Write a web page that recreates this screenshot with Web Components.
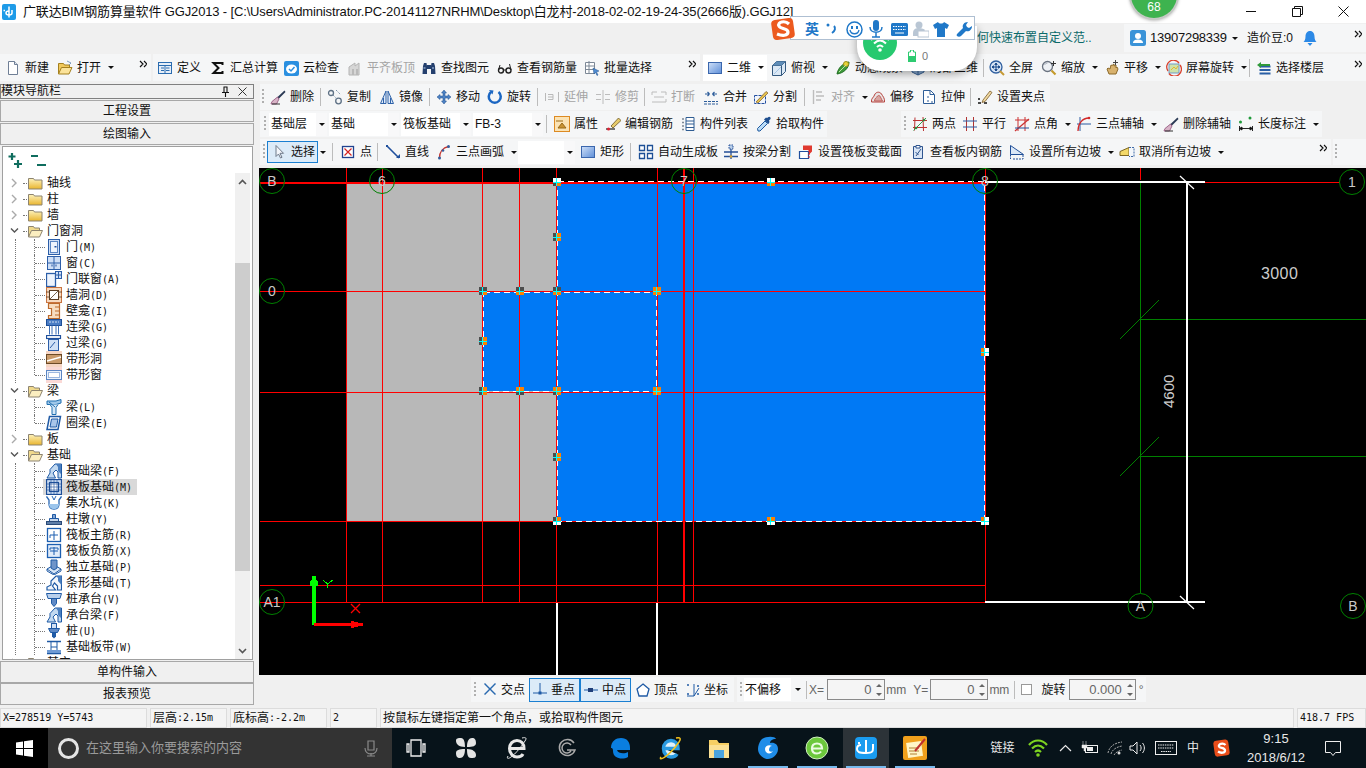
<!doctype html>
<html>
<head>
<meta charset="utf-8">
<style>
  html, body { margin: 0; height: 100%; overflow: hidden; }
  body {
    width: 1366px; height: 768px; position: relative;
    display: flex; flex-direction: column;
    background: #f0f0f0; color: #111;
    font: 12px/16px "Liberation Sans", "Noto Sans CJK SC", sans-serif;
  }
  .row { display: flex; flex: none; }
  .main { display: flex; flex: none; height: 623px; }
  .work { display: flex; flex-direction: column; width: 1107px; margin-left: 5px; flex: none; }
  .work .row { margin-left: 1px; gap: 0; }
  i { font: normal 10px/16px "DejaVu Sans Mono", monospace; }
</style>
</head>
<body>

<gl-titlebar>广联达BIM钢筋算量软件 GGJ2013 - [C:\Users\Administrator.PC-20141127NRHM\Desktop\白龙村-2018-02-02-19-24-35(2666版).GGJ12]</gl-titlebar>

<div class="row" style="height:31px;padding-top:1px;box-sizing:border-box;justify-content:flex-end">
  <gl-bar style="height:28px;width:147px;background:#f0f0f0">
    <span style="color:#0b6a6a;white-space:nowrap">何快速布置自定义范..</span>
  </gl-bar>
  <gl-bar style="height:28px;width:242px">
    <gl-tool i="user" w="103" style="margin-left:2px"><span style="font-size:13px;letter-spacing:-.25px">13907298339</span></gl-tool>
    <gl-drop></gl-drop>
    <span style="margin-left:6px;white-space:nowrap">造价豆:0</span>
    <gl-icon n="bell" style="margin-left:9px"></gl-icon>
    <gl-more style="margin-left:auto"></gl-more>
  </gl-bar>
</div>

<div class="row" style="height:30px;padding-bottom:3px;box-sizing:border-box">
  <gl-bar style="width:151px;padding-left:1px">
    <gl-tool i="new" w="52">新建</gl-tool>
    <gl-tool i="open" w="64" drop>打开</gl-tool>
    <gl-more style="margin-left:auto"></gl-more>
  </gl-bar>
  <gl-bar style="width:547px;margin-left:2px">
    <gl-tool i="define" w="53">定义</gl-tool>
    <gl-tool i="sigma" w="73">汇总计算</gl-tool>
    <gl-tool i="cloud" w="64">云检查</gl-tool>
    <gl-tool i="flat" w="74" disabled>平齐板顶</gl-tool>
    <gl-tool i="find" w="76">查找图元</gl-tool>
    <gl-tool i="glasses" w="87">查看钢筋量</gl-tool>
    <gl-tool i="batch" w="71">批量选择</gl-tool>
    <gl-more style="margin-left:auto"></gl-more>
  </gl-bar>
  <gl-bar style="width:663px;margin-left:3px">
    <gl-tool i="rect" w="64" drop style="background:#fff;height:26px">二维</gl-tool>
    <gl-tool i="cube" w="64" drop>俯视</gl-tool>
    <gl-tool i="orbit" w="75">动态观察</gl-tool>
    <gl-tool i="local" w="75">局部三维</gl-tool>
    <gl-sep w="4"></gl-sep>
    <gl-tool i="full" w="52">全屏</gl-tool>
    <gl-tool i="zoom" w="63" drop>缩放</gl-tool>
    <gl-tool i="pan" w="62" drop>平移</gl-tool>
    <gl-tool i="turn" w="84" drop>屏幕旋转</gl-tool>
    <gl-sep w="6"></gl-sep>
    <gl-tool i="floors" w="76">选择楼层</gl-tool>
    <gl-more style="margin-left:auto"></gl-more>
  </gl-bar>
</div>

<div class="main">
  <gl-sidebar>
    <gl-tree-folder label="轴线"></gl-tree-folder>
    <gl-tree-folder label="柱"></gl-tree-folder>
    <gl-tree-folder label="墙"></gl-tree-folder>
    <gl-tree-folder label="门窗洞" open>
      <gl-tree-leaf i="door" k="(M)">门</gl-tree-leaf>
      <gl-tree-leaf i="win" k="(C)">窗</gl-tree-leaf>
      <gl-tree-leaf i="doorwin" k="(A)">门联窗</gl-tree-leaf>
      <gl-tree-leaf i="hole" k="(D)">墙洞</gl-tree-leaf>
      <gl-tree-leaf i="niche" k="(I)">壁龛</gl-tree-leaf>
      <gl-tree-leaf i="link" k="(G)">连梁</gl-tree-leaf>
      <gl-tree-leaf i="lintel" k="(G)">过梁</gl-tree-leaf>
      <gl-tree-leaf i="bandhole">带形洞</gl-tree-leaf>
      <gl-tree-leaf i="bandwin" last>带形窗</gl-tree-leaf>
    </gl-tree-folder>
    <gl-tree-folder label="梁" open>
      <gl-tree-leaf i="beam" k="(L)">梁</gl-tree-leaf>
      <gl-tree-leaf i="ring" k="(E)" last>圈梁</gl-tree-leaf>
    </gl-tree-folder>
    <gl-tree-folder label="板"></gl-tree-folder>
    <gl-tree-folder label="基础" open>
      <gl-tree-leaf i="fbeam" k="(F)">基础梁</gl-tree-leaf>
      <gl-tree-leaf i="raft" k="(M)" selected>筏板基础</gl-tree-leaf>
      <gl-tree-leaf i="sump" k="(K)">集水坑</gl-tree-leaf>
      <gl-tree-leaf i="pier" k="(Y)">柱墩</gl-tree-leaf>
      <gl-tree-leaf i="rmain" k="(R)">筏板主筋</gl-tree-leaf>
      <gl-tree-leaf i="rneg" k="(X)">筏板负筋</gl-tree-leaf>
      <gl-tree-leaf i="iso" k="(P)">独立基础</gl-tree-leaf>
      <gl-tree-leaf i="strip" k="(T)">条形基础</gl-tree-leaf>
      <gl-tree-leaf i="pcap" k="(V)">桩承台</gl-tree-leaf>
      <gl-tree-leaf i="fbeam" k="(F)">承台梁</gl-tree-leaf>
      <gl-tree-leaf i="pile" k="(U)">桩</gl-tree-leaf>
      <gl-tree-leaf i="band" k="(W)">基础板带</gl-tree-leaf>
    </gl-tree-folder>
    <gl-tree-folder label="其它"></gl-tree-folder>
  </gl-sidebar>

  <div class="work">
    <div class="row" style="height:26px;margin-bottom:1px">
      <gl-bar grip="6" style="width:790px">
        <gl-tool i="erase" w="52">删除</gl-tool>
        <gl-sep w="5"></gl-sep>
        <gl-tool i="copy" w="52">复制</gl-tool>
        <gl-tool i="mirror" w="51">镜像</gl-tool>
        <gl-sep w="6"></gl-sep>
        <gl-tool i="move" w="51">移动</gl-tool>
        <gl-tool i="spin" w="52">旋转</gl-tool>
        <gl-sep w="5"></gl-sep>
        <gl-tool i="extend" w="51" disabled>延伸</gl-tool>
        <gl-tool i="trim" w="51" disabled>修剪</gl-tool>
        <gl-sep w="5"></gl-sep>
        <gl-tool i="break" w="52" disabled>打断</gl-tool>
        <gl-tool i="merge" w="50">合并</gl-tool>
        <gl-tool i="split" w="53">分割</gl-tool>
        <gl-sep w="5"></gl-sep>
        <gl-tool i="align" w="59" disabled drop>对齐</gl-tool>
        <gl-tool i="offset" w="51">偏移</gl-tool>
        <gl-tool i="stretch" w="51">拉伸</gl-tool>
        <gl-sep w="5"></gl-sep>
        <gl-tool i="grips" w="76">设置夹点</gl-tool>
      </gl-bar>
    </div>
    <div class="row" style="height:26px;margin-bottom:2px">
      <gl-bar grip="9" style="width:567px">
        <gl-combo w="58">基础层</gl-combo>
        <gl-combo w="70" style="margin-left:2px">基础</gl-combo>
        <gl-combo w="70" style="margin-left:2px">筏板基础</gl-combo>
        <gl-combo w="70" style="margin-left:2px">FB-3</gl-combo>
        <gl-sep w="7"></gl-sep>
        <gl-tool i="attr" w="51">属性</gl-tool>
        <gl-tool i="pen" w="75">编辑钢筋</gl-tool>
        <gl-tool i="list" w="76">构件列表</gl-tool>
        <gl-tool i="pick" w="75">拾取构件</gl-tool>
      </gl-bar>
      <gl-bar grip="7" style="width:421px;margin-left:74px">
        <gl-tool i="two" w="50">两点</gl-tool>
        <gl-tool i="par" w="52">平行</gl-tool>
        <gl-tool i="ang" w="62" drop>点角</gl-tool>
        <gl-tool i="arc3" w="87" drop>三点辅轴</gl-tool>
        <gl-tool i="erase" w="75">删除辅轴</gl-tool>
        <gl-tool i="dim" w="88" drop>长度标注</gl-tool>
      </gl-bar>
    </div>
    <div class="row" style="height:26px;margin-bottom:3px">
      <gl-bar grip="7" style="width:1071px">
        <gl-tool i="cursor" w="51" on>选择</gl-tool>
        <gl-drop style="width:10px"></gl-drop>
        <gl-sep w="8"></gl-sep>
        <gl-tool i="point" w="38">点</gl-tool>
        <gl-sep w="7"></gl-sep>
        <gl-tool i="line" w="51">直线</gl-tool>
        <gl-tool i="arc" w="84" drop>三点画弧</gl-tool>
        <gl-combo w="57" style="margin:0 1px 0 2px"></gl-combo>
        <gl-tool i="rect" w="51">矩形</gl-tool>
        <gl-sep w="7"></gl-sep>
        <gl-tool i="auto" w="85">自动生成板</gl-tool>
        <gl-tool i="bsplit" w="75">按梁分割</gl-tool>
        <gl-tool i="section" w="112">设置筏板变截面</gl-tool>
        <gl-tool i="viewbar" w="99">查看板内钢筋</gl-tool>
        <gl-tool i="slope" w="110" drop>设置所有边坡</gl-tool>
        <gl-tool i="noslope" w="110" drop>取消所有边坡</gl-tool>
        <gl-more style="margin-left:auto"></gl-more>
      </gl-bar>
      <gl-bar grip="6" style="width:33px;margin-left:2px"></gl-bar>
    </div>

    <gl-canvas></gl-canvas>

    <gl-snapbar></gl-snapbar>
  </div>
</div>

<gl-statusbar>
  <gl-cell w="147"><i>X=278519 Y=5743</i></gl-cell>
  <gl-cell w="77">层高<i>:2.15m</i></gl-cell>
  <gl-cell w="97">底标高<i>:-2.2m</i></gl-cell>
  <gl-cell w="47"><i>2</i></gl-cell>
  <gl-cell w="914">按鼠标左键指定第一个角点，或拾取构件图元</gl-cell>
  <gl-cell w="69"><i>418.7 FPS</i></gl-cell>
</gl-statusbar>

<win-taskbar></win-taskbar>

<gl-float-ball></gl-float-ball>
<ime-bar></ime-bar>

<script>
  'use strict';
  // icon bodies, all on a 16x16 box
  const ICONS = {
    new: '<path d="M3.5 1.5h6l3 3v10h-9z" fill="#fff" stroke="#6f7f96"/><path d="M9.5 1.5v3h3" fill="#dfe6ef" stroke="#6f7f96"/>',
    open: '<path d="M1.5 14V3.5h5l1 1.5h5V8" fill="#f1c95c" stroke="#a4801f"/><path d="M1.5 14l3-6.5h10.500l-3 6.500z" fill="#fbe39a" stroke="#a4801f"/><path d="M10 1l4 2-2 2" fill="none" stroke="#7c9cc0"/>',
    define: '<rect x="1.500" y="2.500" width="13" height="11" fill="#e6eef8" stroke="#2b6cb0"/><path d="M1.500 5.500h13M4 8h3M4 10.500h3M9 8h3.500M9 10.500h3.500M8 5.500v8" stroke="#2b6cb0" fill="none"/>',
    sigma: '<path d="M12.500 5V3h-9l5 5-5 5h9v-2" fill="none" stroke="#111" stroke-width="2"/>',
    cloud: '<rect x="1" y="1" width="15" height="15" rx="2" fill="#2a8fe0"/><ellipse cx="8.500" cy="9" rx="5.500" ry="4.500" fill="#fff"/><path d="M6 9l2 2 3.500-4" fill="none" stroke="#2a8fe0" stroke-width="1.500"/>',
    flat: '<path d="M2 15V7l6-4v3l4-3v12z" fill="#d6d6d6" stroke="#b4b4b4"/><path d="M5 9h2v6H5zM9 9h2v6H9z" fill="#b9b9b9"/>',
    find: '<path d="M2 6l1-3h2.500l.5 3v8H1.500zM10 6l.5-3H13l1 3 .5 8H10z" fill="#24406e"/><rect x="6" y="5" width="4" height="4" fill="#24406e"/><path d="M2.500 8h2M11 8h2" stroke="#b7cff0"/>',
    glasses: '<circle cx="4" cy="10.500" r="2.500" fill="none" stroke="#222" stroke-width="1.400"/><circle cx="11.500" cy="10.500" r="2.500" fill="none" stroke="#222" stroke-width="1.400"/><path d="M6.500 10h2.500M1.500 10L3 5M14 10l-1.500-6" stroke="#222" fill="none"/>',
    batch: '<path d="M1.500 2.500h9v11h-9zM1.500 6h9M1.500 9.500h9M5 1v13" fill="#fff" stroke="#7d8896"/><path d="M9 8l6 3-2.500 1 1.500 3-1 .5-1.500-3L10 14z" fill="#4e8ad0" stroke="#24548f" stroke-width=".5"/>',
    rect: '<defs><linearGradient id="g1" x1="0" y1="0" x2="1" y2="1"><stop offset="0" stop-color="#cfe0f8"/><stop offset="1" stop-color="#5d8ed8"/></linearGradient></defs><rect x="1.500" y="2.500" width="13" height="11" fill="url(#g1)" stroke="#3a66ad"/>',
    cube: '<path d="M1.500 5.500l4-4h9v10l-4 4h-9z" fill="#dbe8f5" stroke="#34597f"/><path d="M1.500 5.500h9v10M10.500 5.500l4-4" fill="none" stroke="#34597f"/><path d="M1.500 5.500l4-4h9l-4 4z" fill="#5f8db8"/><path d="M3 14l7-7" stroke="#a6c5e4"/>',
    orbit: '<path d="M2 14C3 8 8 3 14 2c0 6-5 11-12 12z" fill="#3e9a3a" stroke="#1f6d22"/><circle cx="11" cy="4" r="2.500" fill="#e7d43a" stroke="#9d8f1c"/><path d="M4 12l7-7" stroke="#b9e6a8"/>',
    local: '<path d="M2 5l6-3 6 3v7l-6 3-6-3z" fill="#88a9cf" stroke="#355f93"/><path d="M2 5l6 3 6-3M8 8v7" fill="none" stroke="#355f93"/>',
    full: '<circle cx="7" cy="7" r="6" fill="#d7e3f4" stroke="#2f5f9f" stroke-width="1.300"/><path d="M7 3v8M3 7h8M7 3L5.800 4.500h2.400zM7 11l-1.200-1.500h2.400zM3 7l1.500-1.200v2.400zM11 7L9.500 5.800v2.400z" stroke="#1d4d8d" fill="#1d4d8d"/><path d="M11 11l4 4" stroke="#c59a35" stroke-width="2"/>',
    zoom: '<circle cx="6.500" cy="6.500" r="5" fill="#eef1f5" stroke="#6a7380" stroke-width="1.300"/><path d="M3.500 5a3.500 3.500 0 0 1 3-2" stroke="#aab2bd" fill="none"/><path d="M10.500 10.500l4 4" stroke="#c49a2b" stroke-width="2.200"/><path d="M12.500 1v5M10 3.500h5" stroke="#333"/>',
    pan: '<path d="M3 9l2 5h7l2-5-1-2-1 1V5l-2 1V4L8 5.500 7 5 6 9 4 8z" fill="#d8b26e" stroke="#8c6a2b"/><path d="M11.500 0v5M9 2.500h5" stroke="#444"/>',
    turn: '<rect x="3" y="4" width="10" height="9" fill="#cfe3a9" stroke="#6f9bc9"/><path d="M5 10l3-3 2 2 2-3" fill="none" stroke="#e2b830"/><path d="M2 11A6.500 6.500 0 0 1 13 3M14 5a6.500 6.500 0 0 1-11 8.500" fill="none" stroke="#d8402c" stroke-width="1.300"/>',
    floors: '<path d="M3.500 6.500h11M3.500 10h11M3.500 13.500h11" stroke="#2a5fa5" stroke-width="1.800"/><path d="M1 5l4-3v2h9v2H5v2z" fill="#2f9a3a"/>',
    erase: '<path d="M14.500 1.500L7 8.500l1.500 1.500 7-7z" fill="#2b3a55"/><path d="M7.500 8L2 12.500c-.5 1-.8 1.800-1 2.500h5.500L9 10z" fill="#d8b3c7" stroke="#8e4f78" stroke-width=".8"/><path d="M2 15h8" stroke="#333"/>',
    copy: '<circle cx="4" cy="4" r="2.500" fill="none" stroke="#5e7185" stroke-width="1.300"/><circle cx="11.500" cy="12" r="2.800" fill="none" stroke="#5e7185" stroke-width="1.300"/><path d="M6 6l4 4M9 1l5 5" stroke="#7f93a9" stroke-dasharray="2 1.500" fill="none"/>',
    mirror: '<path d="M7 2L1.500 14.500H7zM9 2l5.500 12.500H9z" fill="#dfeafa" stroke="#2f63a9"/><path d="M4.500 9v5M11.500 9v5" stroke="#2f63a9"/>',
    move: '<path d="M8 1l2.500 3H9v3h3V5.500L15 8l-3 2.500V9H9v3h1.500L8 15l-2.500-3H7V9H4v1.500L1 8l3-2.500V7h3V4H5.500z" fill="#4d82c4" stroke="#1f4f8f" stroke-width=".5"/>',
    spin: '<path d="M11.500 3A6 6 0 1 1 4 3" fill="none" stroke="#1b66c2" stroke-width="2.500"/><path d="M2 1l4.500.5-1 4z" fill="#1b66c2"/>',
    extend: '<path d="M1.500 4v8M14.500 3v10M4 8h5M4 5.500h5v5H4" fill="none" stroke="#b9b9b9"/>',
    trim: '<path d="M8 1v14M1 5.500h5M10 5.500h5M1 10.500h5M10 10.500h5" fill="none" stroke="#bcbcbc"/>',
    break: '<path d="M1 3h5M10 3h5M1 13h14V10M1 3v3M15 3v3M3 8h10" fill="none" stroke="#bcbcbc"/>',
    merge: '<path d="M1 12.500h14M1 15h14" stroke="#2d5d9a" stroke-dasharray="3 1"/><path d="M2 5h4.500M14 5H9.500M6.500 5L4.500 3M6.500 5l-2 2M9.500 5l2-2M9.500 5l2 2" fill="none" stroke="#2d5d9a" stroke-width="1.200"/>',
    split: '<path d="M1.500 6.500h11v8h-11z" fill="#f1f5fb" stroke="#234fa0" stroke-dasharray="3 1"/><path d="M3 13L13 2.500l2 1.500L5 14z" fill="#e6c24b" stroke="#7b5a2b" stroke-width=".7"/>',
    align: '<path d="M2.500 1v14M5 3h6M5 7h8M5 11h5" fill="none" stroke="#bdbdbd" stroke-width="1.400"/>',
    offset: '<path d="M1.500 13c-.5-4 2-4 3-7 1-3 5-4 7-1 1 2 3.500 4 3 8z" fill="#e9e4e4" stroke="#b5413c"/><path d="M4.500 12c0-3 2-3 3-5 1-1 2.500-.5 3 1l2 4z" fill="#d8a6a2" stroke="#b5413c" stroke-width=".7"/>',
    stretch: '<path d="M2.500 1.500h7l4 4v9h-11z" fill="#fff" stroke="#2e5d97"/><path d="M9 1.500v4h4M7 7v2M7 11v2M10 13h2" stroke="#2e5d97" fill="none"/>',
    grips: '<path d="M1 14h3M7 14h3M1 10h2" stroke="#111" stroke-width="1.500"/><path d="M6 11L13 2l2 1.500-7 9-3 1z" fill="#efd9a2" stroke="#7a5a2a" stroke-width=".8"/>',
    attr: '<rect x=".5" y=".5" width="15" height="15" fill="#fbe3b4" stroke="#dd8a22"/><path d="M4 12l4-5 4 5zM2 5h7" fill="#c99334" stroke="#9a6a17"/>',
    pen: '<path d="M1 13h9" stroke="#2d2d2d" stroke-width="1.300"/><path d="M6 10l7.500-8L16 4.500 8 12z" fill="#e6cb6c" stroke="#6b5524" stroke-width=".8"/><circle cx="3.500" cy="13" r="1.500" fill="#d23"/>',
    list: '<path d="M2 3h2M2 6.500h2M2 10h2M2 13.500h2" stroke="#7c8794" stroke-width="1.500"/><path d="M6 1.500h8v13H6zM6 5h8M6 8h8M6 11.500h8" fill="#fff" stroke="#2f5c92"/>',
    pick: '<path d="M2 15l-.5-2.500L9 5l2.500 2.500L4 15z" fill="#bcdcf6" stroke="#1f5a9f"/><path d="M8 3.500l4.500 4.500 1-2-.5-1.500 1.500-1.500a1.500 1.500 0 0 0-2-2L11 2 10 1.500z" fill="#1f4f8f"/>',
    two: '<path d="M3 1.500l-.5 13M11 1l.5 14M1 4.500l14 0M1 11.500h14" stroke="#b33" fill="none"/><path d="M1.500 14.500L14 2" stroke="#33994a"/><circle cx="4" cy="12" r="1.300" fill="#2f8f40"/><circle cx="12" cy="4" r="1.300" fill="#2f8f40"/>',
    par: '<path d="M4.500 1v14M11.500 1v14" stroke="#b13232"/><path d="M1 5h14M1 11h14" stroke="#2d5ba3"/>',
    ang: '<path d="M4 1v14M11 1v14M1 4h14" stroke="#c33" fill="none"/><path d="M1 15L15 3" stroke="#c33" stroke-width="1.300"/><path d="M1 12h14" stroke="#234f99"/>',
    arc3: '<path d="M4 1v14M1 8h14" stroke="#2a5aa0" fill="none"/><path d="M2 15C2 8 6 2 13 2" fill="none" stroke="#d22a2a" stroke-width="1.300"/><circle cx="13" cy="2" r="1.300" fill="#d22a2a"/>',
    dim: '<circle cx="2.500" cy="6" r="1.500" fill="#1f9a3a"/><circle cx="12" cy="2" r="1.500" fill="#1f9a3a"/><path d="M1.500 10v5M14.500 10v5M1.500 12.500h13M1.500 12.500l2.500-1.500v3zM14.500 12.500l-2.500-1.500v3z" stroke="#111" fill="#111" stroke-width=".9"/>',
    cursor: '<path d="M5 1.500v11l2.500-2.500 2 4 1.500-.7-2-4h3.500z" fill="#f3f6fb" stroke="#6f7a8a"/>',
    point: '<rect x="2.500" y="2.500" width="11" height="11" fill="#fff" stroke="#20418f" stroke-width="1.300"/><path d="M4.500 4.500l7 7M11.500 4.500l-7 7" stroke="#d52424" stroke-width="1.200"/>',
    line: '<path d="M2 2l12 12" stroke="#1f4f9c" stroke-width="1.600"/><path d="M11 14h4v-4z" fill="#1f4f9c"/><rect x="1" y="1" width="2" height="2" fill="#1f4f9c"/>',
    arc: '<path d="M3.500 14C3.500 8 7 3.500 12.500 2.500" fill="none" stroke="#c6352f" stroke-width="1.500"/><circle cx="3.500" cy="14" r="1.500" fill="#355d9c"/><circle cx="7" cy="6.500" r="1.300" fill="#355d9c"/><circle cx="12.500" cy="2.500" r="1.500" fill="#355d9c"/>',
    auto: '<path d="M1.500 1.500h5v5h-5zM9.500 1.500h5v5h-5zM1.500 9.500h5v5h-5zM9.500 9.500h5v5h-5z" fill="#fff" stroke="#1c4f96" stroke-width="1.300"/>',
    bsplit: '<rect x="6" y="1" width="4" height="4" fill="#b9cfe9" stroke="#244f97" stroke-dasharray="1.500 1"/><path d="M8 5v10M1 8h14M1 12.500h14" stroke="#244f97" stroke-width="1.300"/><circle cx="8" cy="12.500" r="1.300" fill="#d8a12b"/>',
    section: '<path d="M1.500 7.500h9v7h-9z" fill="#fff" stroke="#1f4f9e" stroke-width="1.200"/><path d="M5 1.500h9v6l-3 3V6H5z" fill="#e03a30"/><path d="M11 6v9" stroke="#d22" stroke-dasharray="2 1"/>',
    viewbar: '<path d="M3.500 2.500h9v12h-9z" fill="#d8e4f4" stroke="#2e558f"/><path d="M6 1.500h4v2.500H6zM6 12l5-7M5.500 8l3 3" fill="#fff" stroke="#2e558f"/>',
    slope: '<path d="M1.500 1.500l13 9H1.500z" fill="#dbe8f7" stroke="#214f98"/><path d="M4 15h10M14 11v4M1.500 10.500V15" stroke="#214f98" stroke-dasharray="2 1" fill="none"/>',
    noslope: '<path d="M1 7.500l9-4v8H1z" fill="#f3d868" stroke="#7c6622"/><path d="M10 3.500h5v9h-5" fill="#f4f7fb" stroke="#3f6aa6" stroke-dasharray="2 1"/>',
    user: '<rect x="0" y="0" width="16" height="16" rx="2.500" fill="#3a93d8"/><circle cx="8" cy="6" r="3" fill="#fff"/><path d="M3 13c0-3 3-3.500 5-3.500s5 .5 5 3.500z" fill="#fff"/>',
    bell: '<path d="M8 1c-3 0-4.500 2.500-4.500 5.500 0 3-1 4.500-2 5.500h13c-1-1-2-2.500-2-5.500C12.500 3.500 11 1 8 1z" fill="#2c89e6"/><path d="M5.500 13h5l-2.500 3z" fill="#2c89e6"/>',
    folder: '<defs><linearGradient id="fg" x1="0" y1="0" x2="0" y2="1"><stop offset="0" stop-color="#fdf2bd"/><stop offset="1" stop-color="#e9b52e"/></linearGradient></defs><path d="M1.500 3.500h5l1 1.500h7.500v9h-13.500z" fill="url(#fg)" stroke="#8d8470"/>',
    folderopen: '<path d="M1.500 14V3.500h5l1 1.500h5v2.500" fill="#f0d98c" stroke="#8d8470"/><path d="M1.500 14l3-6.500h11l-3 6.500z" fill="#fbeec0" stroke="#8d8470"/>',
    door: '<rect x="2.500" y="0.500" width="11" height="15" fill="#cfdff6" stroke="#2c5ea8"/><rect x="4.500" y="2.500" width="7" height="11" fill="#eef4fd" stroke="#5b86c4"/><rect x="8.500" y="7" width="2" height="1.500" fill="#1f4f9c"/>',
    win: '<rect x="1.500" y="1.500" width="13" height="13" fill="#cfdff6" stroke="#2c5ea8"/><path d="M8 1.500v13M1.500 8h13" stroke="#2c5ea8"/><path d="M6 9.500v2M10 9.500v2" stroke="#1f4f9c"/>',
    doorwin: '<rect x="0.500" y="2.500" width="9" height="13" fill="#eef4fd" stroke="#2c5ea8" stroke-width="1.300"/><rect x="9.500" y="0.500" width="6" height="7" fill="#cfdff6" stroke="#2c5ea8"/><path d="M12.500 0.500v7M9.500 4h6" stroke="#2c5ea8"/>',
    hole: '<rect x="0.500" y="0.500" width="15" height="15" fill="#f6d9c0" stroke="#c9743f"/><rect x="3.500" y="3.500" width="9" height="9" fill="#fff" stroke="#5a3c22"/><path d="M3.500 12.500l9-9M0 5h3M13 5h3M0 10h3M13 10h3" stroke="#5a3c22" stroke-width=".8"/>',
    niche: '<path d="M2.500 0.500h11v15h-11v-3h3v-7h-3z" fill="#f7dcc0" stroke="#bc6a2c" stroke-width="1.200"/><path d="M9 4h4M9 8h4M9 12h4" stroke="#bc6a2c"/>',
    link: '<rect x="0.500" y="0.500" width="15" height="6" fill="#4a7cc4" stroke="#1c4e98"/><path d="M3.500 6.500v9M12.500 6.500v9M6 6.500v9M10 6.500v9" stroke="#3d6eb6"/><path d="M3 3h10" stroke="#cfe0f5" stroke-dasharray="2 1"/>',
    lintel: '<rect x="0.500" y="0.500" width="14" height="3" fill="#fff" stroke="#1f4f9c" stroke-width="1.200"/><rect x="2.500" y="4.500" width="10" height="11" fill="#cfe0f6" stroke="#2c5ea8"/><path d="M4 13l5-6" stroke="#2c5ea8"/>',
    bandhole: '<rect x="0" y="0" width="16" height="16" fill="#f6d6c4"/><rect x="0.500" y="3.500" width="15" height="9" fill="#c99a6a" stroke="#6c4a26"/><path d="M1 10l14-4" stroke="#fff" stroke-width="1.500"/>',
    bandwin: '<rect x="0" y="0" width="16" height="16" fill="#fad9d6"/><rect x="0.500" y="3.500" width="15" height="9" fill="#eaf1fb" stroke="#5b86c4"/><rect x="2.500" y="5.500" width="11" height="5" fill="#fff" stroke="#9db8df"/>',
    beam: '<path d="M1 2h9l5-1.500V4l-5 1.500H1z" fill="#9fc8ea" stroke="#1f6fb0"/><path d="M4 5.500l2 3v7h4v-7l2-3" fill="#d4e7f7" stroke="#1f6fb0"/><path d="M3 3l6 5" stroke="#1f6fb0"/>',
    ring: '<path d="M3.500 1.500h11l-2.500 13H1z" fill="#fff" stroke="#1f5aa5" stroke-width="1.500"/><path d="M5.500 4h6.500L10.500 12H4z" fill="#a9c6ea" stroke="#1f5aa5"/>',
    fbeam: '<path d="M1 15l3-5V6.500L9 1h6.500v14h-3.500V9l-2-2-3 3 2.500 5z" fill="#c2d9f0" stroke="#1f5aa5"/><path d="M10 1h5v10l-3-3V4z" fill="#4a7fc0"/>',
    raft: '<rect x="0.500" y="0.500" width="15" height="15" fill="#cfe0f5" stroke="#1c4e98" stroke-width="1.300"/><rect x="3.500" y="3.500" width="9" height="9" fill="#fff" stroke="#1c4e98" stroke-width="1.200"/><path d="M8 0v16M0 8h16M0 5h16M0 11h16M5 0v16M11 0v16" stroke="#1c4e98" stroke-width=".6"/>',
    sump: '<path d="M0.500 1.500L3 5v4c0 3 2 5 5 5s5-2 5-5V5l2.500-3.500" fill="none" stroke="#2766b3" stroke-width="1.300"/><path d="M3 9c0 3 2 5 5 5s5-2 5-5z" fill="#9cc5ec"/><path d="M6 1l2 4 2-4" stroke="#2766b3" fill="none"/>',
    pier: '<path d="M6.500 3.500h3v4h-3z" fill="#7fa4d4" stroke="#1f5aa5"/><path d="M3.500 7.500h9v3h-9z" fill="#c8d8ec" stroke="#1f5aa5"/><rect x="0.500" y="10.500" width="15" height="3" fill="#5e7ea8" stroke="#2a4a78"/>',
    rmain: '<rect x="1.500" y="1.500" width="13" height="13" fill="#fff" stroke="#1c5fb1" stroke-width="1.300"/><path d="M8 4v9M4 8h8M4 8v3" stroke="#1c5fb1" fill="none"/>',
    rneg: '<rect x="1.500" y="1.500" width="13" height="13" fill="#e1ecf9" stroke="#1c5fb1" stroke-width="1.300"/><path d="M8 4v8M4 8h8M4 5h8M4 5v2M12 5v2" stroke="#1c5fb1" fill="none"/>',
    iso: '<path d="M1 10l7-4 7 4-7 5z" fill="#d8e6f6" stroke="#1f5aa5"/><path d="M1 10v2l7 4 7-4v-2" fill="none" stroke="#1f5aa5"/><path d="M5 1h6v8l-3 2-3-2z" fill="#6e94c9" stroke="#1f5aa5"/>',
    strip: '<path d="M1 15v-3l4-2V6l5-5h5.500v14h-4v-4l-3-3-2 3 3 4z" fill="#f2f6fb" stroke="#1f5aa5" stroke-width="1.200"/><path d="M10 1h5.500v9L12 6V3z" fill="#4a7fc0"/>',
    pcap: '<path d="M0.500 2.500h15l-1.500 5h-12z" fill="#b9d0ec" stroke="#1f5aa5"/><path d="M5.500 7.500h5v5l-2.500 3-2.500-3z" fill="#5f8ac6" stroke="#1f5aa5"/>',
    pile: '<rect x="5.500" y="0.500" width="5" height="5" fill="#d5e3f5" stroke="#1f5aa5"/><path d="M2.500 5.500h11l-2 4h-7z" fill="#5f8ac6" stroke="#1f5aa5"/><path d="M6 9.500h4v4l-2 2-2-2z" fill="#1f5aa5"/>',
    band: '<path d="M1 2.500h14M1 14.500h14" stroke="#1f5aa5" stroke-width="1.400"/><path d="M5 2.500v12M11 2.500v12M5 8h6" stroke="#1f5aa5"/><rect x="1" y="11" width="14" height="3" fill="#6e9ad4"/>'
  };

  class GlIcon extends HTMLElement {
    static get observedAttributes() { return ['n']; }
    constructor() {
      super();
      this.attachShadow({mode: 'open'}).innerHTML =
        `<style>:host{display:inline-flex;width:16px;height:16px;flex:none}svg{display:block}</style>
         <svg width="16" height="16" viewBox="0 0 16 16"></svg>`;
    }
    attributeChangedCallback(name, old, val) {
      this.shadowRoot.querySelector('svg').innerHTML = ICONS[val] || '';
    }
  }

  class GlTitlebar extends HTMLElement {
    constructor() {
      super();
      this.attachShadow({mode: 'open'}).innerHTML = `<style>
        :host{display:flex;flex:none;height:23px;background:#fff;align-items:center;position:relative;font-size:13px;letter-spacing:-.15px}
        .logo{width:14px;height:16px;margin:0 7px 0 2px;flex:none}
        .t{white-space:nowrap;flex:1;overflow:hidden}
        .btn{width:46px;height:23px;display:flex;align-items:center;justify-content:center;flex:none}
        </style>
        <svg class="logo" viewBox="0 0 14 16"><rect width="14" height="16" rx="2" fill="#1e9be8"/><path d="M7 2.500v11M3 6.500H1.500M7 7c-2 0-3 .8-3 2s1 2 3 2 3-.8 3-2V6" fill="none" stroke="#fff" stroke-width="1.500"/></svg>
        <span class="t"><slot></slot></span>
        <span class="btn"><svg width="11" height="11"><path d="M0 5.500h10" stroke="#111"/></svg></span>
        <span class="btn"><svg width="11" height="11"><path d="M.5 2.500h8v8h-8zM2.500 2.500v-2h8v8h-2" fill="none" stroke="#111"/></svg></span>
        <span class="btn"><svg width="11" height="11"><path d="M.5.500l10 10M10.500.500l-10 10" stroke="#111"/></svg></span>`;
    }
  }

  class GlBar extends HTMLElement {
    constructor() {
      super();
      this.attachShadow({mode: 'open'}).innerHTML = `<style>
        :host{display:flex;flex:none;align-items:center;height:100%;background:#f5f6f7;box-sizing:border-box}
        .g{flex:none;display:none;height:100%;align-items:center;justify-content:center}
        .g b{display:block;width:2px;height:16px;background:repeating-linear-gradient(#b0b0b0 0 2px,transparent 2px 4px)}
        </style><span class="g"><b></b></span><slot></slot>`;
    }
    connectedCallback() {
      const w = this.getAttribute('grip');
      if (w) {
        const g = this.shadowRoot.querySelector('.g');
        g.style.display = 'flex';
        g.style.width = w + 'px';
      }
    }
  }

  class GlDrop extends HTMLElement {
    constructor() {
      super();
      this.attachShadow({mode: 'open'}).innerHTML = `<style>
        :host{display:inline-flex;width:12px;height:100%;align-items:center;justify-content:center;flex:none}
        b{border:3px solid transparent;border-top:3px solid #111;border-bottom:0}
        </style><b></b>`;
    }
  }

  class GlTool extends HTMLElement {
    constructor() {
      super();
      this.attachShadow({mode: 'open'}).innerHTML = `<style>
        :host{display:inline-flex;flex:none;align-items:center;gap:4px;height:22px;padding:0 0 0 4px;box-sizing:border-box;white-space:nowrap}
        :host([disabled]){color:#a4a4a4}
        :host([on]){background:#dcebf8;box-shadow:inset 0 0 0 1px #1a7fd1}
        .d{display:none}
        :host([drop]) .d{display:inline-flex;margin-left:auto}
        </style><gl-icon></gl-icon><slot></slot><gl-drop class="d"></gl-drop>`;
    }
    connectedCallback() {
      this.shadowRoot.querySelector('gl-icon').setAttribute('n', this.getAttribute('i'));
      this.style.width = this.getAttribute('w') + 'px';
    }
  }

  class GlSep extends HTMLElement {
    constructor() {
      super();
      this.attachShadow({mode: 'open'}).innerHTML = `<style>
        :host{display:inline-flex;justify-content:center;align-items:center;height:100%;flex:none}
        b{width:1px;height:18px;background:#bcbcbc}</style><b></b>`;
    }
    connectedCallback() { this.style.width = this.getAttribute('w') + 'px'; }
  }

  class GlMore extends HTMLElement {
    constructor() {
      super();
      this.attachShadow({mode: 'open'}).innerHTML = `<style>
        :host{display:inline-flex;width:8px;height:8px;margin-right:4px;margin-bottom:8px;flex:none}
        </style><svg width="9" height="8"><path d="M1 1l3 3-3 3M5 1l3 3-3 3" fill="none" stroke="#111" stroke-width="1.200"/></svg>`;
    }
  }

  class GlCombo extends HTMLElement {
    constructor() {
      super();
      this.attachShadow({mode: 'open'}).innerHTML = `<style>
        :host{display:inline-flex;height:23px;flex:none;background:#fff;box-sizing:border-box;align-items:center;padding-left:2px;white-space:nowrap}
        span{flex:1;overflow:hidden}
        gl-drop{width:11px;height:23px;background:#f8f8f9}
        </style><span><slot></slot></span><gl-drop></gl-drop>`;
    }
    connectedCallback() { this.style.width = this.getAttribute('w') + 'px'; }
  }

  class GlTreeFolder extends HTMLElement {
    constructor() {
      super();
      this.attachShadow({mode: 'open'}).innerHTML = `<style>
        :host{display:block;position:relative}
        .h{display:flex;align-items:center;height:16px;position:relative;white-space:nowrap}
        .c{width:27px;height:16px;flex:none;position:relative}
        .c svg{position:absolute;left:10px;top:3px}
        .c:after{content:"";position:absolute;left:23px;top:8px;width:4px;border-top:1px dotted #777}
        .l{margin-left:4px}
        .k{display:none;position:relative}
        :host([open]) .k{display:block}
        .k:before{content:"";position:absolute;left:15px;top:0;bottom:0;border-left:1px dotted #777}
        </style>
        <div class="h"><span class="c"></span><gl-icon></gl-icon><span class="l"></span></div>
        <div class="k"><slot></slot></div>`;
    }
    connectedCallback() {
      const open = this.hasAttribute('open'), r = this.shadowRoot;
      r.querySelector('.l').textContent = this.getAttribute('label');
      r.querySelector('gl-icon').setAttribute('n', open ? 'folderopen' : 'folder');
      r.querySelector('.c').innerHTML = open
        ? '<svg width="9" height="9"><path d="M1 2.500l3.500 3.500L8 2.500" fill="none" stroke="#555" stroke-width="1.400"/></svg>'
        : '<svg width="9" height="10"><path d="M2 1l4 4-4 4" fill="none" stroke="#aaa" stroke-width="1.400"/></svg>';
    }
  }

  class GlTreeLeaf extends HTMLElement {
    constructor() {
      super();
      this.attachShadow({mode: 'open'}).innerHTML = `<style>
        :host{display:flex;align-items:center;height:16px;position:relative;padding-left:46px;white-space:nowrap}
        .v{position:absolute;left:34px;top:0;height:16px;border-left:1px dotted #777}
        :host([last]) .v{height:8px}
        .x{position:absolute;left:35px;top:8px;width:10px;border-top:1px dotted #777}
        .s{display:flex;align-items:center;height:16px;gap:4px;position:relative}
        :host([selected]) .bg{position:absolute;left:43px;width:94px;height:16px;background:#d9d9d9}
        .k{font:10px/16px "DejaVu Sans Mono",monospace}
        </style><span class="v"></span><span class="x"></span><span class="bg"></span>
        <span class="s"><gl-icon></gl-icon><span class="t"><slot></slot><span class="k"></span></span></span>`;
    }
    connectedCallback() {
      this.shadowRoot.querySelector('gl-icon').setAttribute('n', this.getAttribute('i'));
      this.shadowRoot.querySelector('.k').textContent = this.getAttribute('k') || '';
    }
  }

  class GlSidebar extends HTMLElement {
    constructor() {
      super();
      const pb = `border:1px solid #a8a8a8;box-sizing:border-box;background:#f0f0f0;display:flex;align-items:center;justify-content:center;flex:none;margin-bottom:1px;`;
      this.attachShadow({mode: 'open'}).innerHTML = `<style>
        :host{display:flex;flex-direction:column;width:254px;height:621px;flex:none;box-sizing:border-box;font-size:12px}
        .cap{height:15px;border:1px solid #808080;box-sizing:border-box;display:flex;align-items:center;justify-content:space-between;margin-bottom:1px;flex:none;line-height:13px;padding-right:6px}
        .cap svg{margin-left:8px}
        .btn{${pb}height:22px;}
        .pane{flex:1;margin:0 1px 1px 2px;border:1px solid #a0a0a0;background:#fff;display:flex;flex-direction:column;min-height:0;overflow:hidden}
        .top{height:26px;box-sizing:border-box;flex:none;padding:5px 0 0 4px;display:flex;gap:6px}
        .r{flex:1;display:flex;min-height:0}
        .tree{flex:1;overflow:hidden;margin-left:-3px;padding-top:2px}
        .sb{width:15px;margin-right:2px;background:#f0f0f0;display:flex;flex-direction:column;flex:none}
        .sb .a{height:17px;flex:none;display:flex;align-items:center;justify-content:center}
        .sb .tr{flex:1;padding-top:73px;padding-bottom:71px;display:flex;min-height:0}
        .sb .th{flex:1;background:#cdcdcd}
        </style>
        <div class="cap"><span>模块导航栏</span><span style="display:flex;align-items:center">
          <svg width="9" height="11"><path d="M2.500 1h4M3 1v5M6 1v5M1 6.500h7M4.500 6.500V11" fill="none" stroke="#111" stroke-width="1.100"/></svg>
          <svg width="9" height="9"><path d="M.5.500l8 8M8.500.500l-8 8" stroke="#333"/></svg></span></div>
        <div class="btn">工程设置</div>
        <div class="btn">绘图输入</div>
        <div class="pane">
          <div class="top">
            <svg width="17" height="17"><path d="M5 1v7M1.500 4.500h7M11 8v8M7 12h8" stroke="#0f6d5e" stroke-width="2.200"/></svg>
            <svg width="17" height="17"><path d="M1 4h7M7 13h9" stroke="#0f6d5e" stroke-width="2.200"/></svg>
          </div>
          <div class="r">
            <div class="tree"><slot></slot></div>
            <div class="sb">
              <div class="a"><svg width="9" height="6"><path d="M1 5l3.500-3.500L8 5" fill="none" stroke="#555" stroke-width="1.600"/></svg></div>
              <div class="tr"><div class="th"></div></div>
              <div class="a"><svg width="9" height="6"><path d="M1 1l3.500 3.500L8 1" fill="none" stroke="#555" stroke-width="1.600"/></svg></div>
            </div>
          </div>
        </div>
        <div class="btn" style="margin-bottom:0">单构件输入</div>
        <div class="btn" style="margin-bottom:0">报表预览</div>`;
    }
  }

  // the drawing itself: coordinates in the viewBox are window pixels
  class GlCanvas extends HTMLElement {
    constructor() {
      super();
      const L = (x1, y1, x2, y2, c = '#f00', w = 1, x = '') =>
        `<line x1="${x1}" y1="${y1}" x2="${x2}" y2="${y2}" stroke="${c}" stroke-width="${w}" ${x}/>`;
      const G = '#4d4d4d', O = '#ff8000', W = '#fff';
      const H = (x, y, a, b, c, d) => `<g><rect x="${x-4}" y="${y-4}" width="4" height="4" fill="${a}"/><rect x="${x}" y="${y-4}" width="4" height="4" fill="${b}"/>
        <rect x="${x-4}" y="${y}" width="4" height="4" fill="${c}"/><rect x="${x}" y="${y}" width="4" height="4" fill="${d}"/>
        <path d="M${x-.5} ${y-4}v8M${x-4} ${y+.5}h8" stroke="#0ff"/></g>`;
      const B = (x, y, t) => `<circle cx="${x}" cy="${y}" r="12.500" fill="none" stroke="#008000" shape-rendering="auto"/><text x="${x}" y="${y+5}" text-anchor="middle" fill="#c8c8c8" font-size="14" font-family="Liberation Sans">${t}</text>`;
      let s = '';
      s += '<rect x="346" y="182" width="211" height="339" fill="#b8b8b8"/>';
      s += '<rect x="557" y="182" width="428" height="339" fill="#0079f5"/>';
      s += '<rect x="483" y="292" width="174" height="99" fill="#0079f5"/>';
      for (const y of [291.5, 392.5, 521.5, 585.5, 602.5]) s += L(260, y, 985, y);
      s += L(260, 182.5, 985, 182.5, '#f00', 2) + L(1205, 182.5, 1340, 182.5);
      for (const x of [346.5, 382.5, 482.5, 519.5, 556.5, 657.5, 693.5, 985.5]) s += L(x, 168, x, 602);
      s += L(684, 168, 684, 602, '#f00', 2);
      // green axes
      s += L(1140.5, 182, 1140.5, 593, '#008000') + L(1140.5, 168, 1140.5, 180);
      s += L(1140, 319.5, 1366, 319.5, '#008000') + L(1140, 456.5, 1366, 456.5, '#008000');
      const ticks = 'shape-rendering="auto"';
      s += L(1120, 339, 1159, 300, '#008000', 1, ticks) + L(1120, 476, 1159, 437, '#008000', 1, ticks);
      // white dimension lines
      s += L(985, 182, 1205, 182, W, 2) + L(985, 602, 1205, 602, W, 2) + L(1187, 182, 1187, 602, W, 2);
      s += L(1180, 176, 1194, 189, W, 1.200, ticks) + L(1180, 596, 1194, 609, W, 1.200, ticks);
      s += L(557, 603, 557, 675, W, 2) + L(657, 603, 657, 675, W, 2);
      // selection frames
      const dash = 'stroke-dasharray="6 4"';
      s += `<rect x="557.500" y="181.500" width="427" height="340" fill="none" stroke="#fff" ${dash}/>`;
      s += `<rect x="483.500" y="292.500" width="173" height="99" fill="none" stroke="#fff" ${dash}/>`;
      // grip handles
      s += H(557, 182, W, W, G, O) + H(557, 237, G, O, G, O) + H(557, 457, G, O, G, O) + H(557, 521, G, O, W, W);
      s += H(771, 182, W, W, O, O) + H(771, 521, O, O, W, W) + H(985, 352, O, W, O, W) + H(985, 521, O, W, W, W);
      s += H(483, 291, G, G, G, O) + H(520, 291, G, G, O, O) + H(557, 291, G, G, O, O) + H(657, 291, O, O, O, O);
      s += H(483, 341, G, O, G, O);
      s += H(483, 391, G, O, G, O) + H(520, 391, O, O, G, G) + H(557, 391, O, O, G, O) + H(657, 391, O, O, O, O);
      // axis bubbles
      s += B(272, 181, 'B') + B(382, 181, '6') + B(684, 181, '7') + B(985, 181, '8') + B(1352, 182, '1');
      s += B(272, 291, '0') + B(272, 602, 'A1') + B(1140.500, 606, 'A') + B(1353, 606, 'B');
      s += '<text x="1261" y="279" fill="#ccc" font-size="16" font-family="Liberation Sans" letter-spacing=".4">3000</text>';
      s += '<text transform="translate(1174 408) rotate(-90)" fill="#ccc" font-size="15" font-family="Liberation Sans">4600</text>';
      // UCS arrows
      s += '<path d="M312 625v-39h-2v-5l2-1v-4h4v4l2 1v5h-2v39z" fill="#0f0"/>';
      s += '<path d="M314 623h37v-2l5 1 7 1.500v2l-7 1.500-5 1v-2h-37z" fill="#f00"/>';
      s += '<path d="M323 580l4.500 4 5.500-4M327.500 584v4" stroke="#0f0" fill="none"/><path d="M351 604l9 9M360 604l-9 9" stroke="#f00" stroke-width="1.300" shape-rendering="auto"/>';
      this.attachShadow({mode: 'open'}).innerHTML = `<style>
        :host{display:block;height:507px;flex:none;background:#000}
        svg{display:block}
        </style><svg width="1107" height="507" viewBox="259 168 1107 507" shape-rendering="crispEdges">${s}</svg>`;
    }
  }

  class GlSnapbar extends HTMLElement {
    constructor() {
      super();
      const input = (w, v) => `<span class="in" style="width:${w}px"><span>${v}</span><svg width="10" height="20"><path d="M2 7l3-3 3 3zM2 13l3 3 3-3z" fill="#666"/></svg></span>`;
      const ic = {
        cross: '<path d="M2 2l5 5-5 5 1 1 5-5 5 5 1-1-5-5 5-5-1-1-5 5-5-5z" fill="#2a6ab0"/>',
        perp: '<path d="M1 11h14M8 1v10" stroke="#1f5aa5"/><rect x="6.500" y="9.500" width="3" height="3" fill="#1f5aa5"/>',
        mid: '<path d="M1 8h14" stroke="#1f5aa5"/><rect x="5" y="6" width="5" height="4" fill="#1f3f7a"/>',
        apex: '<path d="M8 2l6 5-2 7H4L2 7z" fill="#fff" stroke="#1f5aa5" stroke-width="1.300"/>',
        coord: '<path d="M9 2v12H2M9 14l5-8" stroke="#1f5aa5" fill="none"/><circle cx="3" cy="3" r="1" fill="#1f5aa5"/><circle cx="3" cy="12" r="1" fill="#1f5aa5"/><circle cx="13" cy="4" r="1" fill="#1f5aa5"/><circle cx="13" cy="12" r="1" fill="#1f5aa5"/>'
      };
      const tool = (n, t, w, pad, on) => `<span class="t${on ? ' on' : ''}" style="width:${w}px;padding-left:${pad}px"><svg width="16" height="16" viewBox="0 0 16 16">${ic[n]}</svg>${t}</span>`;
      this.attachShadow({mode: 'open'}).innerHTML = `<style>
        :host{display:flex;flex:none;height:32px;padding:2px 0 5px 212px;box-sizing:border-box;align-items:stretch}
        .b{display:flex;align-items:center;background:#f5f6f7;flex:none;height:25px}
        .g{width:2px;height:16px;margin:0 5px 0 3px;background:repeating-linear-gradient(#b0b0b0 0 2px,transparent 2px 4px);flex:none}
        .t{display:inline-flex;align-items:center;gap:3px;height:24px;box-sizing:border-box;white-space:nowrap;flex:none}
        .on{background:#dcebf8;box-shadow:inset 0 0 0 1px #1a7fd1}
        .in{display:inline-flex;align-items:center;justify-content:flex-end;height:21px;border:1px solid #8a8a8a;background:#f5f5f5;box-sizing:border-box;color:#666;font-size:13px}
        .in span{padding-right:3px}
        .m{color:#666;white-space:nowrap}
        .s{width:1px;height:18px;background:#bcbcbc;flex:none}
        .c{width:11px;height:11px;border:1px solid #999;margin:0 9px 0 3px;box-sizing:border-box;background:#fff}
        .cb{width:47px;height:23px;background:#fff;display:flex;align-items:center;padding-left:1px;box-sizing:border-box;white-space:nowrap}
        </style>
        <div class="b" style="width:263px">
          <span class="g"></span>
          ${tool('cross', '交点', 48, 1)}${tool('perp', '垂点', 51, 3, 1)}${tool('mid', '中点', 51, 3, 1)}${tool('apex', '顶点', 50, 4)}${tool('coord', '坐标', 51, 4)}
        </div>
        <div class="b" style="width:409px;margin-left:3px">
          <span class="g" style="margin-right:2px"></span>
          <span class="cb">不偏移</span><gl-drop style="width:14px"></gl-drop><span class="s" style="margin:0 2px 0 1px"></span>
          <span class="m">X=</span>&nbsp;${input(58, '0')}<span class="m" style="margin-left:1px">mm</span><span class="m" style="margin:0 2px 0 7px">Y=</span>${input(58, '0')}<span class="m" style="margin-left:1px">mm</span><span class="s" style="margin:0 3px 0 5px"></span>
          <span class="c"></span><span>旋转</span>&nbsp;${input(67, '0.000')}<span class="m" style="margin-left:3px">°</span>
        </div>`;
    }
  }

  class GlStatusbar extends HTMLElement {
    constructor() {
      super();
      this.attachShadow({mode: 'open'}).innerHTML = `<style>
        :host{display:flex;flex:none;height:21px;gap:3px;padding-top:1px;box-sizing:border-box;background:#f0f0f0}
        </style><slot></slot>`;
    }
  }

  class GlCell extends HTMLElement {
    constructor() {
      super();
      this.attachShadow({mode: 'open'}).innerHTML = `<style>
        :host{display:flex;align-items:center;flex:none;height:20px;border:1px solid #dcdcdc;box-sizing:border-box;padding-left:2px;white-space:nowrap;background:#f4f4f4}
        </style><slot></slot>`;
    }
    connectedCallback() { this.style.width = this.getAttribute('w') + 'px'; }
  }

  class WinTaskbar extends HTMLElement {
    constructor() {
      super();
      const apps = [
        [48, '<path d="M7 4h10v16H7zM3 8h2v8H3zM19 8h2v8h-2z" fill="none" stroke="#eee" stroke-width="1.300"/>'],
        [51, '<path d="M11 11C5 11 2 8 2 5s2-3 5-3 4 4 4 9zM13 11c0-6 2-9 5-9s4 2 4 5-3 4-9 4zM13 13c6 0 9 3 9 6s-2 3-5 3-4-3-4-9zM11 13c0 6-2 9-5 9s-4-2-4-5 3-4 9-4z" fill="#e4e4e4"/>'],
        [51, '<path d="M6 12.500h13c0-5-3-8-7-8s-7.500 3-7.500 8 3.500 8.500 7.500 8.500c3 0 5-1 6-3" fill="none" stroke="#e8e8e8" stroke-width="3"/><path d="M3 20C0 25 8 23 20 5c2-3 1-4-3-3" fill="none" stroke="#e8e8e8"/>'],
        [50, '<path d="M19 7A8 8 0 1 0 20 14H12M16 9A5 5 0 1 0 16 15" fill="none" stroke="#aaa" stroke-width="1.500"/>'],
        [56, '<path d="M3 12C3 5 8 2 13 2c6 0 9 4 9 10v2H9c1 4 8 4 11 2v5c-5 3-15 2-15-6 0-3-1-3-2-3z" fill="#0a7ee0"/>'],
        [45, '<path d="M5 12.500h14c0-5-3-8-7-8s-7.500 3-7.500 8 3.500 8.500 7.500 8.500c3 0 5-1 6-3" fill="#dff1fb" stroke="#2a9ae0" stroke-width="3.500"/><path d="M2 21C-1 25 8 23 20 6c2-3 2-5-3-4" fill="none" stroke="#f3c21c" stroke-width="1.500"/>'],
        [52, '<path d="M2 4h8l2 3h10v15H2z" fill="#f6cf64"/><rect x="2" y="9" width="20" height="13" fill="#fbe195"/><rect x="7" y="14" width="10" height="8" fill="#4aa3e0"/>'],
        [46, '<path d="M5 4C9 0 19 0 20 3c-4 0-6 2-6 4 4-1 8 1 8 6 0 6-6 10-10 10S2 19 2 13C2 10 3 7 5 4z" fill="#1f8de8"/><path d="M9 13c0-3 4-5 7-3-2 0-3 2-3 4s3 2 4 1c-2 4-8 3-8-2z" fill="#fff"/>', 1],
        [52, '<circle cx="12" cy="12" r="11" fill="#6cc83c" stroke="#cfeec0"/><path d="M7 12.500h10c0-3-2-5-5-5s-5 2-5 5 2 5 5 5c2 0 3-.5 4-2" fill="none" stroke="#eafbe0" stroke-width="2.200"/>', 1],
        [46, '<rect x="1" y="1" width="22" height="22" rx="4" fill="#1a9cf0"/><path d="M12 4v14M6 7H4M7 9c-3 0-4 1-4 4s2 4 9 4 7-2 7-5v-4" fill="none" stroke="#fff" stroke-width="2"/>', 2],
        [52, '<rect x="0" y="0" width="24" height="24" rx="2" fill="#f0a01c"/><rect x="4" y="6" width="15" height="15" fill="#fff5c8" transform="rotate(-8 11 13)"/><path d="M6 12h10M6 15h10M7 18h7" stroke="#b08030"/><path d="M12 15L22 3" stroke="#c03030" stroke-width="2"/>', 1]
      ];
      const cells = apps.map(([w, svg, st]) =>
        `<span class="app${st === 2 ? ' act' : ''}${st ? ' run' : ''}" style="width:${w}px"><svg width="24" height="24" viewBox="0 0 24 24">${svg}</svg></span>`).join('');
      const tray = (w, inner) => `<span class="tr" style="width:${w}px">${inner}</span>`;
      this.attachShadow({mode: 'open'}).innerHTML = `<style>
        :host{display:flex;flex:none;height:40px;background:#07131a;color:#e8e8e8;font-size:12px}
        .st{width:48px;background:#000;display:flex;align-items:center;justify-content:center;flex:none}
        .se{width:344px;background:#333;display:flex;align-items:center;flex:none;color:#9a9a9a;font-size:13px;position:relative}
        .se .o{width:15px;height:15px;border:3px solid #e4e4e4;border-radius:50%;margin:0 7px 0 10px;flex:none}
        .se svg{position:absolute;left:316px;top:12px}
        .app{display:flex;align-items:center;justify-content:center;height:40px;flex:none;position:relative}
        .act{background:#2c3338}
        .run:after{content:"";position:absolute;bottom:0;left:50%;margin-left:-20px;width:40px;height:2px;background:#76b9ed}
        .sp{flex:1}
        .tr{display:flex;align-items:center;justify-content:center;flex:none;height:40px;white-space:nowrap}
        .cl{flex-direction:column;line-height:19px;font-size:13px}
        </style>
        <span class="st"><svg width="17" height="17"><path d="M0 2.500l7-1v6.500H0zM8 1.300L17 0v8H8zM0 9h7v6.500l-7-1zM8 9h9v8l-9-1.300z" fill="#fff"/></svg></span>
        <span class="se"><span class="o"></span>在这里输入你要搜索的内容
          <svg width="14" height="17"><path d="M4 1h6v9H4zM1 8c0 8 12 8 12 0M7 13v3M3 16h8" fill="none" stroke="#8a8a8a" stroke-width="1.200"/></svg></span>
        ${cells}
        <span class="sp"></span>
        ${tray(35, '链接')}
        ${tray(36, '<svg width="20" height="18" viewBox="0 0 20 18"><path d="M1 6c5-6 13-6 18 0M4 9.500c4-4 8-4 12 0M7 13c2-2 4-2 6 0" fill="none" stroke="#7ed321" stroke-width="2.200"/><circle cx="10" cy="16" r="1.800" fill="#7ed321"/></svg>')}
        ${tray(18, '<svg width="13" height="8"><path d="M1 7l5.500-5.500L12 7" fill="none" stroke="#e8e8e8" stroke-width="1.200"/></svg>')}
        ${tray(32, '<svg width="18" height="16"><rect x="4.500" y="5.500" width="12" height="7" fill="none" stroke="#eee"/><rect x="6" y="7" width="6" height="4" fill="#eee"/><path d="M2 1v4M5 1v4M1 5h5v3H4v3H3V8H1z" fill="#eee" stroke="#eee" stroke-width=".5"/></svg>')}
        ${tray(18, '<svg width="16" height="16"><path d="M1 13c1-6 6-10 14-11M4 14c1-4 5-7 11-8M7 15c1-2 4-4 8-5" fill="none" stroke="#aaa" stroke-dasharray="2 1"/><circle cx="12" cy="13" r="1.500" fill="#ddd"/></svg>')}
        ${tray(26, '<svg width="16" height="16"><path d="M1 6h3l4-4v12l-4-4H1z" fill="none" stroke="#eee"/><path d="M11 5c1.500 2 1.500 4 0 6M13.500 3c2.500 3 2.500 7 0 10" fill="none" stroke="#eee"/></svg>')}
        ${tray(32, '<svg width="22" height="16"><rect x=".5" y="1.500" width="21" height="13" fill="none" stroke="#eee"/><path d="M3 5h16M3 8h16M6 11.500h10" stroke="#eee" stroke-dasharray="1.500 .8"/></svg>')}
        ${tray(22, '中')}
        ${tray(36, '<svg width="18" height="18" viewBox="0 0 18 18"><rect x="1" y="1" width="15" height="16" rx="3" fill="#ea4d1a" transform="rotate(-8 9 9)"/><path d="M12.500 6C10 3.500 5 5 6 7.500c1 2 6 1 6 4 0 2.500-4 3-7 1" fill="none" stroke="#fff" stroke-width="2.300"/></svg>')}
        <span class="tr cl" style="width:72px"><span>9:15</span><span>2018/6/12</span></span>
        ${tray(42, '<svg width="17" height="17"><path d="M.5 1.500h15v11h-5l-2.500 3-2.500-3h-5z" fill="none" stroke="#eee"/></svg>')}
        <span style="width:12px;flex:none"></span>`;
    }
  }

  class GlFloatBall extends HTMLElement {
    constructor() {
      super();
      this.attachShadow({mode: 'open'}).innerHTML = `<style>
        :host{position:absolute;left:0;top:0;width:0;height:0}
        .card{position:absolute;left:857px;top:26px;width:120px;height:45px;background:#fff;border-radius:0 0 24px 24px;box-shadow:0 3px 8px rgba(0,0,0,.35)}
        .ball{position:absolute;left:863px;top:26px;width:34px;height:34px;border-radius:50%;background:#27c96f}
        .ball svg{position:absolute;left:7px;top:8px}
        .bat{position:absolute;left:908px;top:50px}
        .n{position:absolute;left:922px;top:48px;color:#777;font-size:11px}
        .hi{position:absolute;left:1131px;top:-28px;width:46px;height:46px;border-radius:50%;background:#3eb34f;box-shadow:0 0 0 2px #c5c9c5,0 1px 3px 2px rgba(0,0,0,.25)}
        .hi span{position:absolute;left:0;right:0;bottom:4px;text-align:center;color:#fff;font-size:12px;line-height:14px}
        </style>
        <div class="card"></div>
        <div class="ball"><svg width="20" height="18" viewBox="0 0 20 18"><path d="M1 6c5-6 13-6 18 0M4 9.500c4-4 8-4 12 0M7 13c2-2 4-2 6 0" fill="none" stroke="#fff" stroke-width="2"/><circle cx="10" cy="16" r="1.800" fill="#fff"/></svg></div>
        <svg class="bat" width="8" height="12"><path d="M2.500 0h3v2h2v10H.5V2h2z" fill="#fff" stroke="#2ecb71"/><rect x="1" y="6" width="6" height="6" fill="#2ecb71"/></svg>
        <span class="n">0</span>
        <div class="hi"><span>68</span></div>`;
    }
  }

  class ImeBar extends HTMLElement {
    constructor() {
      super();
      const C = '#1f78c8';
      this.attachShadow({mode: 'open'}).innerHTML = `<style>
        :host{position:absolute;left:790px;top:16px;width:185px;height:24px;background:#fff;border:1px solid #aebfd2;box-sizing:border-box;display:flex;align-items:center;color:${C};font-weight:bold;font-size:14px}
        .s{position:absolute;left:-20px;top:0;width:26px;height:24px}
        .w{position:absolute;top:3px;display:flex;justify-content:center;width:20px;height:18px;align-items:center}
        </style>
        <svg class="s" viewBox="0 0 26 24"><rect x="1" y="2" width="22" height="20" rx="4" fill="#ec5a1f" transform="rotate(-8 12 12)"/><path d="M18 7C14 3 6 5 8 9c1 3 9 2 9 6 0 4-6 4-11 2" fill="none" stroke="#fff" stroke-width="3.200"/></svg>
        <span class="w" style="left:11px">英</span>
        <span class="w" style="left:30px"><svg width="12" height="14"><circle cx="3" cy="3" r="1.500" fill="${C}"/><path d="M9 4c2 2 1 5-2 7" stroke="${C}" stroke-width="2" fill="none"/></svg></span>
        <span class="w" style="left:53px"><svg width="17" height="17"><circle cx="8.500" cy="8.500" r="7.500" fill="none" stroke="${C}" stroke-width="1.500"/><path d="M4 9c1 5 8 5 9 0" fill="none" stroke="${C}" stroke-width="1.300"/><rect x="5" y="5" width="2" height="3" fill="${C}"/><rect x="10" y="5" width="2" height="3" fill="${C}"/></svg></span>
        <span class="w" style="left:75px"><svg width="14" height="18"><rect x="4" y="0" width="6" height="11" rx="3" fill="${C}"/><path d="M1 7c0 7 12 7 12 0M7 12v5M3 17h8" fill="none" stroke="${C}" stroke-width="1.500"/></svg></span>
        <span class="w" style="left:98px"><svg width="17" height="13"><rect width="17" height="13" rx="1.500" fill="${C}"/><path d="M2 3.500h13M2 6.500h13" stroke="#fff" stroke-dasharray="1.500 1"/><path d="M4 10h9" stroke="#fff"/></svg></span>
        <span class="w" style="left:119px"><svg width="17" height="17"><circle cx="7" cy="4" r="3.500" fill="#b9c6d4"/><path d="M1 12c0-4 3-5 6-5s5 1 6 2l-4 6H1z" fill="#b9c6d4"/><rect x="6" y="10" width="11" height="6" fill="#fff" stroke="#b9c6d4"/></svg></span>
        <span class="w" style="left:140px"><svg width="16" height="15"><path d="M5 0L0 3l2 4 2-1v9h8V6l2 1 2-4-5-3c-1 2-5 2-6 0z" fill="${C}"/></svg></span>
        <span class="w" style="left:163px"><svg width="16" height="16"><path d="M1 15c-1-1 0-2 1-3l5-5c-1-3 1-6 5-6l-2 3 1 2 2 1 3-2c0 4-3 6-6 5l-5 5c-1 1-3 1-4 0z" fill="${C}"/></svg></span>`;
    }
  }

  customElements.define('gl-icon', GlIcon);
  customElements.define('gl-titlebar', GlTitlebar);
  customElements.define('gl-bar', GlBar);
  customElements.define('gl-drop', GlDrop);
  customElements.define('gl-tool', GlTool);
  customElements.define('gl-sep', GlSep);
  customElements.define('gl-more', GlMore);
  customElements.define('gl-combo', GlCombo);
  customElements.define('gl-tree-folder', GlTreeFolder);
  customElements.define('gl-tree-leaf', GlTreeLeaf);
  customElements.define('gl-sidebar', GlSidebar);
  customElements.define('gl-canvas', GlCanvas);
  customElements.define('gl-snapbar', GlSnapbar);
  customElements.define('gl-statusbar', GlStatusbar);
  customElements.define('gl-cell', GlCell);
  customElements.define('win-taskbar', WinTaskbar);
  customElements.define('gl-float-ball', GlFloatBall);
  customElements.define('ime-bar', ImeBar);
</script>
</body>
</html>
